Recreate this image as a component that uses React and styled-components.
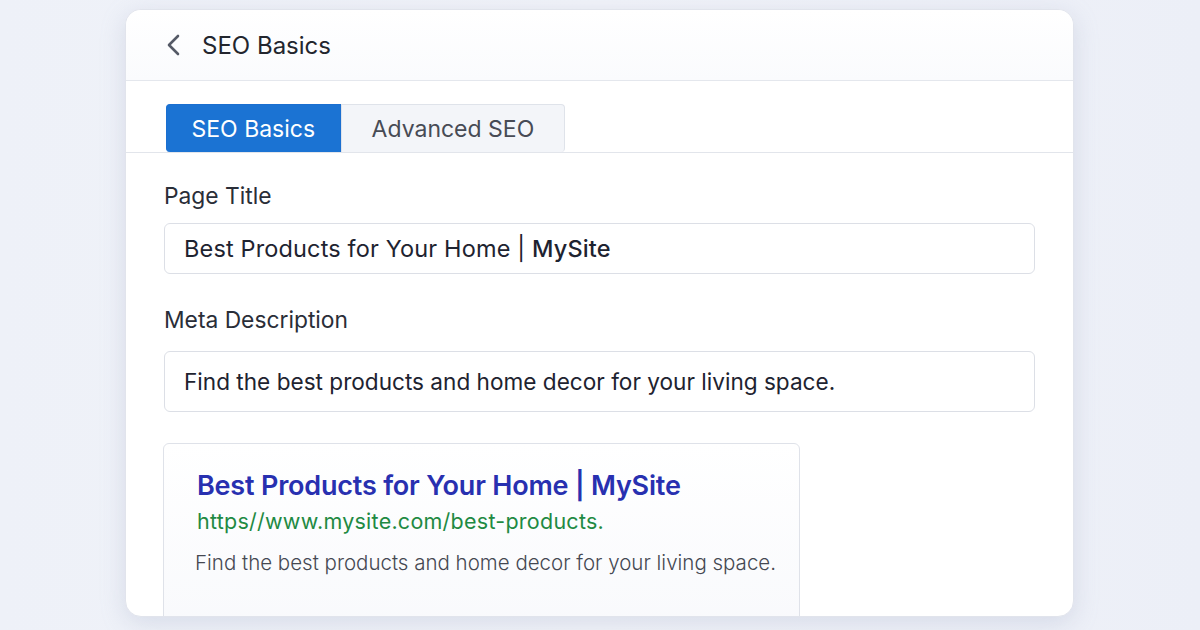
import React from "react";
import styled, { createGlobalStyle } from "styled-components";

const GlobalStyle = createGlobalStyle`
  html, body {
    margin: 0;
    padding: 0;
    background: #eef1f8;
    font-family: "Inter", "Noto Sans", sans-serif;
  }
`;

const Page = styled.div`
  width: 1200px;
  height: 630px;
  display: flex;
  align-items: flex-start;
  padding: 9px 0 0 125px;
  box-sizing: border-box;
  background: linear-gradient(90deg, #eef1f8 0%, #f1f3f9 50%, #eceff7 100%);
  overflow: hidden;
`;

const Card = styled.div`
  width: 949px;
  height: 608px;
  background: #fff;
  border: 1px solid #e1e4ec;
  border-radius: 16px;
  box-shadow: 0 6px 24px rgba(150, 160, 190, 0.28);
  overflow: hidden;
  display: flex;
  flex-direction: column;
  box-sizing: border-box;
`;

const Header = styled.div`
  height: 70px;
  display: flex;
  align-items: center;
  gap: 20px;
  padding-left: 40px;
  border-bottom: 1px solid #e4e7ed;
  background: linear-gradient(180deg, #ffffff 0%, #fafbfd 100%);
  flex-shrink: 0;
`;

const BackButton = styled.button`
  border: none;
  background: none;
  padding: 0;
  display: flex;
  cursor: pointer;
`;

const HeaderTitle = styled.h1`
  margin: 0;
  font-size: 24px;
  font-weight: 400;
  color: #23262e;
`;

const TabBar = styled.div`
  display: flex;
  padding: 23px 0 0 40px;
  border-bottom: 1px solid #e2e5eb;
  flex-shrink: 0;
`;

const Tab = styled.button`
  height: 48px;
  padding: 0 ${(p) => p.$pad}px;
  font-family: inherit;
  font-size: 23px;
  border: 1px solid ${(p) => (p.$active ? "#1b6fd0" : "#dfe3ea")};
  background: ${(p) => (p.$active ? "#1b73d3" : "#f3f5f9")};
  color: ${(p) => (p.$active ? "#ffffff" : "#474b55")};
  border-radius: ${(p) => (p.$active ? "4px 0 0 4px" : "0 4px 4px 0")};
  border-bottom: none;
  cursor: pointer;
`;

const Body = styled.div`
  padding: 29px 38px 0 38px;
  display: flex;
  flex-direction: column;
`;

const Label = styled.label`
  font-size: 22.8px;
  line-height: 28px;
  color: #2a2e38;
  margin-bottom: ${(p) => p.$gap}px;
`;

const Field = styled.div`
  height: ${(p) => p.$h}px;
  border: 1px solid #dcdfe6;
  border-radius: 6px;
  display: flex;
  align-items: center;
  padding-left: 19px;
  font-size: ${(p) => p.$size}px;
  letter-spacing: ${(p) => p.$track || 0}px;
  color: #1e2330;
  box-sizing: border-box;
  margin-bottom: ${(p) => p.$mb}px;
  background: #fff;
  white-space: pre;
`;

const SiteName = styled.span`
  font-weight: 500;
`;

const Preview = styled.div`
  width: 637px;
  height: 200px;
  border: 1px solid #dfe2e9;
  border-radius: 6px;
  padding: 26px 0 0 33px;
  box-sizing: border-box;
  background: linear-gradient(180deg, #ffffff 0%, #f8f9fc 100%);
  margin-left: -1px;
`;

const PreviewTitle = styled.div`
  font-size: 27px;
  line-height: 32px;
  font-weight: 600;
  color: #2830b0;
  letter-spacing: -0.2px;
`;

const PreviewUrl = styled.div`
  font-size: 21.5px;
  line-height: 26px;
  color: #1f8a43;
  margin-top: 6px;
  letter-spacing: 0.25px;
`;

const PreviewDesc = styled.div`
  font-size: 20.5px;
  line-height: 26px;
  color: #454852;
  margin-top: 16px;
  margin-left: -2px;
  font-weight: 300;
`;

const ChevronLeft = () => (
  <svg width="16" height="22" viewBox="0 0 16 22" fill="none">
    <polyline
      points="12,2 3,11 12,20"
      stroke="#555a66"
      strokeWidth="2.6"
      strokeLinecap="round"
      strokeLinejoin="round"
    />
  </svg>
);

const App = () => {
  const [tab, setTab] = React.useState("basics");
  const title = "Best Products for Your Home | MySite";
  const desc = "Find the best products and home decor for your living space.";

  return (
    <>
      <GlobalStyle />
      <Page>
        <Card>
          <Header>
            <BackButton aria-label="Back">
              <ChevronLeft />
            </BackButton>
            <HeaderTitle>SEO Basics</HeaderTitle>
          </Header>
          <TabBar>
            <Tab $active={tab === "basics"} $pad={24.5} onClick={() => setTab("basics")}>
              SEO Basics
            </Tab>
            <Tab $active={tab === "advanced"} $pad={30} onClick={() => setTab("advanced")}>
              Advanced SEO
            </Tab>
          </TabBar>
          <Body>
            <Label $gap={13}>Page Title</Label>
            <Field $h={51} $mb={32} $size={23.5} $track={0.15}>
              Best Products for Your Home | <SiteName>MySite</SiteName>
            </Field>
            <Label $gap={17}>Meta Description</Label>
            <Field $h={61} $mb={31} $size={22.6}>{desc}</Field>
            <Preview>
              <PreviewTitle>{title}</PreviewTitle>
              <PreviewUrl>https//www.mysite.com/best-products.</PreviewUrl>
              <PreviewDesc>{desc}</PreviewDesc>
            </Preview>
          </Body>
        </Card>
      </Page>
    </>
  );
};

export default App;
